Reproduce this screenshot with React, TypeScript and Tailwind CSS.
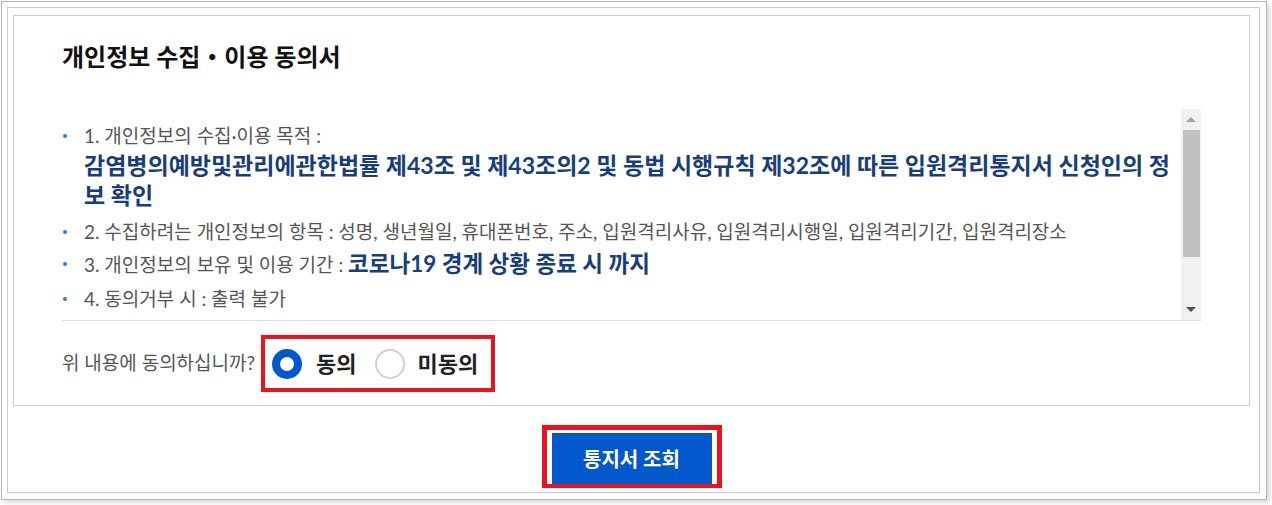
import React from "react";

const font = { fontFamily: 'Lato, "Noto Sans CJK KR", sans-serif' };

function Bullet() {
  return <span className="absolute left-[1px] top-[12px] h-[4px] w-[4px] rounded-full bg-[#2f78e0]" />;
}

function Scrollbar() {
  return (
    <div className="flex w-[20px] flex-col items-center bg-[#f1f1f1]">
      <div className="flex h-[21px] w-full items-center justify-center">
        <span className="h-0 w-0 border-x-[5px] border-b-[5px] border-x-transparent border-b-[#a3a3a3]" />
      </div>
      <div className="ml-[1px] h-[127px] w-[17px] bg-[#c1c1c1]" />
      <div className="flex-1" />
      <div className="flex h-[21px] w-full items-center justify-center">
        <span className="h-0 w-0 border-x-[5px] border-t-[5px] border-x-transparent border-t-[#505050]" />
      </div>
    </div>
  );
}

export default function App() {
  return (
    <div className="h-[505px] w-[1272px] overflow-hidden bg-white" style={font}>
      <div className="ml-[1px] mt-[1px] box-border h-[499px] w-[1266px] border border-[#b4b4b4] pb-[6px] pl-[5px] pr-[6px] pt-[5px] shadow-[3px_3px_4px_rgba(0,0,0,0.14)]">
        <div className="box-border flex h-full flex-col border border-[#c8c8c8] pl-[5px] pr-[9px] pt-[7px]">
          <div className="box-border h-[391px] w-[1237px] border border-[#cccccc] px-[48px] pt-[26px]">
            <h1 className="text-[24px] font-bold leading-[30px] text-[#111]">개인정보 수집・이용 동의서</h1>

            <div className="mt-[37px] flex h-[212px] border-b border-[#dddddd]">
              <ul className="flex-1 pt-[13px] text-[19px] text-[#555]">
                <li className="relative pl-[22px]">
                  <Bullet />
                  <p className="leading-[28px]">1. 개인정보의 수집·이용 목적 :</p>
                  <p className="pr-[6px] text-[23px] font-bold leading-[30px] text-[#183e79]">
                    감염병의예방및관리에관한법률 제43조 및 제43조의2 및 동법 시행규칙 제32조에 따른 입원격리통지서 신청인의 정보 확인
                  </p>
                </li>
                <li className="relative mt-[8px] pl-[22px] leading-[28px]">
                  <Bullet />
                  2. 수집하려는 개인정보의 항목 : 성명, 생년월일, 휴대폰번호, 주소, 입원격리사유, 입원격리시행일, 입원격리기간, 입원격리장소
                </li>
                <li className="relative mt-[4px] pl-[22px] leading-[28px]">
                  <Bullet />
                  3. 개인정보의 보유 및 이용 기간 :{" "}
                  <span className="text-[22.5px] font-bold text-[#183e79]">코로나19 경계 상황 종료 시 까지</span>
                </li>
                <li className="relative mt-[6px] pl-[22px] leading-[28px]">
                  <Bullet />
                  4. 동의거부 시 : 출력 불가
                </li>
              </ul>
              <Scrollbar />
            </div>

            <div className="mt-[14px] flex h-[57px] items-center">
              <span className="text-[19px] text-[#555]">위 내용에 동의하십니까?</span>
              <div className="ml-[6px] box-border flex h-[57px] items-center border-[4px] border-[#e8141e] pl-[7px] pr-[13px]">
                <span className="box-border h-[30px] w-[30px] rounded-full border-[8px] border-[#0058cc] bg-white" />
                <span className="ml-[14px] text-[22px] font-bold text-[#222]">동의</span>
                <span className="ml-[18px] box-border h-[30px] w-[30px] rounded-full border-2 border-[#cfcfcf] bg-white" />
                <span className="ml-[13px] text-[22px] font-bold text-[#222]">미동의</span>
              </div>
            </div>
          </div>

          <div className="mt-[19px] flex justify-center">
            <div className="box-border border-[5px] border-b-[4px] border-[#e8141e] px-[5px] pt-[3px]">
              <button className="h-[51px] w-[160px] bg-[#0058cc] text-[20px] font-bold text-white">통지서 조회</button>
            </div>
          </div>
        </div>
      </div>
    </div>
  );
}
